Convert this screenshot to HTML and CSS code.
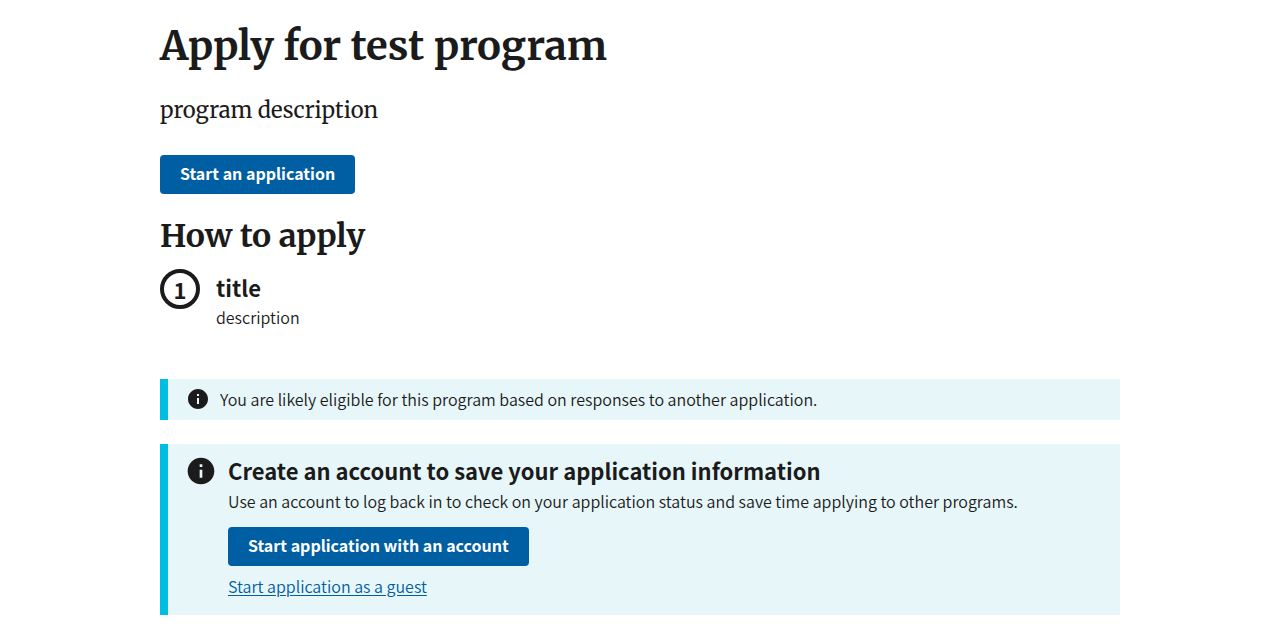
FILE: index.html
```html
<!DOCTYPE html>
<html lang="en">
<head>
<meta charset="utf-8">
<meta name="viewport" content="width=device-width, initial-scale=1">
<title>Apply for test program</title>
<link rel="stylesheet" href="styles.css">
</head>
<body>
<main class="page">
  <h1 class="page-title">Apply for test program</h1>
  <p class="intro">program description</p>
  <button class="button" type="button">Start an application</button>
  <h2 class="section-title">How to apply</h2>
  <ol class="steps">
    <li class="step">
      <div class="step-body">
        <h3 class="step-title">title</h3>
        <p class="text">description</p>
      </div>
    </li>
  </ol>
  <section class="alert alert-slim">
    <svg class="icon icon-small" viewBox="0 0 24 24" aria-hidden="true"><path d="M12 2C6.480 2 2 6.480 2 12s4.480 10 10 10 10-4.480 10-10S17.520 2 12 2zm1 15h-2v-6h2v6zm0-8h-2V7h2v2z"/></svg>
    <p class="text">You are likely eligible for this program based on responses to another application.</p>
  </section>
  <section class="alert">
    <svg class="icon" viewBox="0 0 24 24" aria-hidden="true"><path d="M12 2C6.480 2 2 6.480 2 12s4.480 10 10 10 10-4.480 10-10S17.520 2 12 2zm1 15h-2v-6h2v6zm0-8h-2V7h2v2z"/></svg>
    <div class="alert-body">
      <h3 class="alert-title">Create an account to save your application information</h3>
      <p class="text">Use an account to log back in to check on your application status and save time applying to other programs.</p>
      <button class="button" type="button">Start application with an account</button>
      <a class="link" href="#guest">Start application as a guest</a>
    </div>
  </section>
</main>
</body>
</html>
```
FILE: styles.css
```css
*, *::before { box-sizing: border-box; }
body {
  margin: 0;
  background: #fff;
  color: #1b1b1b;
  font-family: "Source Sans Pro", "Noto Sans CJK SC", "Open Sans", sans-serif;
  font-size: 16px;
  font-weight: 350;
  line-height: 24px;
}
h1, h2, h3, p, ol { margin: 0; padding: 0; }
.page { max-width: 1024px; margin: 0 auto; padding: 20px 32px 24px; }
.page-title, .section-title, .intro { font-family: Merriweather, "Noto Serif", "DejaVu Serif", serif; }
.page-title { font-size: 40px; line-height: 52px; }
.intro { margin: 22px 0 29px; font-size: 22px; font-weight: 400; line-height: 32px; }
.button {
  display: block;
  border: 0;
  border-radius: 4px;
  padding: 0 20px 3px;
  background: #005ea2;
  color: #fff;
  font: inherit;
  font-weight: 700;
  line-height: 36px;
}
.section-title { margin-top: 22px; font-size: 32px; line-height: 40px; }
.steps { margin-top: 13px; list-style: none; counter-reset: step; }
.step { display: flex; gap: 16px; counter-increment: step; }
.step::before {
  content: counter(step);
  flex: none;
  width: 40px;
  height: 40px;
  border: 4px solid #1b1b1b;
  border-radius: 50%;
  font-size: 22px;
  font-weight: 700;
  line-height: 32px;
  text-align: center;
}
.step-title { padding: 2px 0; font-size: 22px; line-height: 32px; }
.alert {
  display: flex;
  gap: 10px;
  margin-top: 24px;
  border-left: 8px solid #00bde3;
  padding: 11px 16px 17px 17px;
  background: #e7f6f8;
}
.alert-slim { align-items: center; margin-top: 50px; padding: 8px 18px 9px; }
.icon { flex: none; width: 32px; height: 32px; fill: #1b1b1b; }
.icon-small { width: 24px; height: 24px; }
.alert-body { flex: 1; padding-left: 1px; }
.alert-title { padding-bottom: 4px; font-size: 22px; line-height: 30px; }
.alert-body .button { margin: 14px 0 8px; }
.link { color: #005ea2; text-underline-offset: 2px; }
```
